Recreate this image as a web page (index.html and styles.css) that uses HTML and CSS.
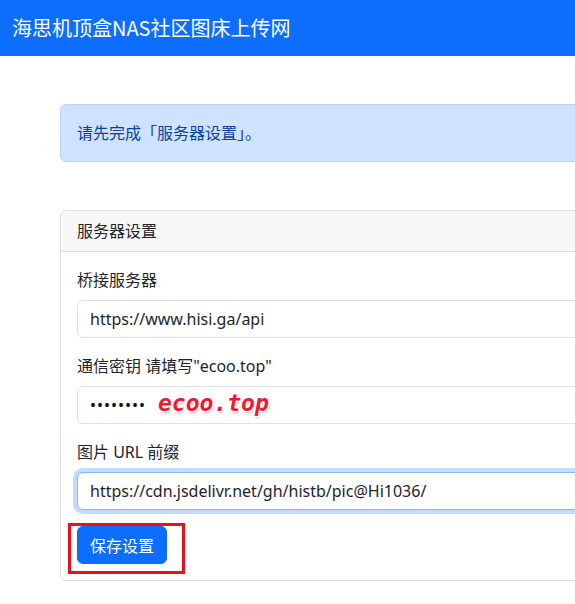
FILE: index.html
```html
<!DOCTYPE html>
<html lang="zh-CN">
<head>
<meta charset="utf-8">
<title>海思机顶盒NAS社区图床上传网</title>
<link rel="stylesheet" href="styles.css">
</head>
<body>
<nav class="navbar">
  <span class="brand">海思机顶盒NAS社区图床上传网</span>
</nav>
<main class="container">
  <div class="alert">请先完成「服务器设置」。</div>
  <section class="card">
    <div class="card-header">服务器设置</div>
    <div class="card-body">
      <div class="field">
        <label class="label">桥接服务器</label>
        <input class="input" type="text" value="https://www.hisi.ga/api">
      </div>
      <div class="field">
        <label class="label">通信密钥 请填写"ecoo.top"</label>
        <div class="input-wrap">
          <input class="input pw" type="password" value="ecoo.top">
          <span class="annot">ecoo.top</span>
        </div>
      </div>
      <div class="field">
        <label class="label">图片 URL 前缀</label>
        <input class="input focused" type="text" value="https://cdn.jsdelivr.net/gh/histb/pic@Hi1036/">
      </div>
      <div class="btn-wrap">
        <button class="btn">保存设置</button>
        <span class="redbox"></span>
      </div>
    </div>
  </section>
</main>
</body>
</html>
```

FILE: styles.css
```css
html {
  overflow: hidden;
}
body {
  margin: 0;
  font-family: "Noto Sans", "Noto Sans CJK SC", sans-serif;
  font-size: 16px;
  line-height: 1.5;
  color: #212529;
  background: #fff;
}
.navbar {
  background: #0d6efd;
  height: 56px;
  padding: 8px 12px;
  box-sizing: border-box;
  display: flex;
  align-items: center;
}
.brand {
  color: #fff;
  font-size: 20px;
  line-height: 30px;
  font-family: "Noto Sans CJK SC", sans-serif;
}
.container {
  margin: 48px 0 0 60px;
  width: 1000px;
}
.alert {
  background: #cfe2ff;
  border: 1px solid #b6d4fe;
  color: #084298;
  border-radius: 6px;
  padding: 16px;
  line-height: 24px;
  margin-bottom: 48px;
}
.card {
  border: 1px solid #dfdfdf;
  border-radius: 6px;
  background: #fff;
}
.card-header {
  background: #f7f7f7;
  border-bottom: 1px solid #dfdfdf;
  padding: 8px 16px;
  line-height: 24px;
  border-radius: 6px 6px 0 0;
}
.card-body {
  padding: 16px;
}
.field {
  margin-bottom: 16px;
  display: flex;
  flex-direction: column;
}
.label {
  line-height: 24px;
  margin-bottom: 8px;
}
.input-wrap {
  position: relative;
}
.input {
  display: block;
  width: 100%;
  box-sizing: border-box;
  height: 38px;
  padding: 6px 12px;
  font: inherit;
  font-size: 16px;
  line-height: 24px;
  color: #212529;
  background: #fff;
  border: 1px solid #dee2e6;
  border-radius: 6px;
  outline: none;
}
.pw {
  letter-spacing: 1px;
  color: #111;
}
.focused {
  border-color: #86b7fe;
  box-shadow: 0 0 0 4px rgba(13, 110, 253, 0.25);
}
.annot {
  position: absolute;
  left: 81px;
  top: 2px;
  font-family: "DejaVu Sans Mono", monospace;
  font-weight: bold;
  font-style: italic;
  font-size: 23px;
  line-height: 30px;
  color: #ee1a30;
  text-shadow: 1px 1px 0 #fff, -1px -1px 0 #fff, 1px -1px 0 #fff, -1px 1px 0 #fff, 1px 2px 3px #bbb;
}
.btn-wrap {
  position: relative;
  display: flex;
}
.btn {
  font: inherit;
  font-family: "Noto Sans CJK SC", sans-serif;
  font-size: 16px;
  line-height: 24px;
  padding: 6px 12px;
  color: #fff;
  background: #0d6efd;
  border: 1px solid #0d6efd;
  border-radius: 6px;
}
.redbox {
  position: absolute;
  left: -9px;
  top: -3px;
  width: 117px;
  height: 51px;
  box-sizing: border-box;
  border: 3px solid #e8101c;
}
```
